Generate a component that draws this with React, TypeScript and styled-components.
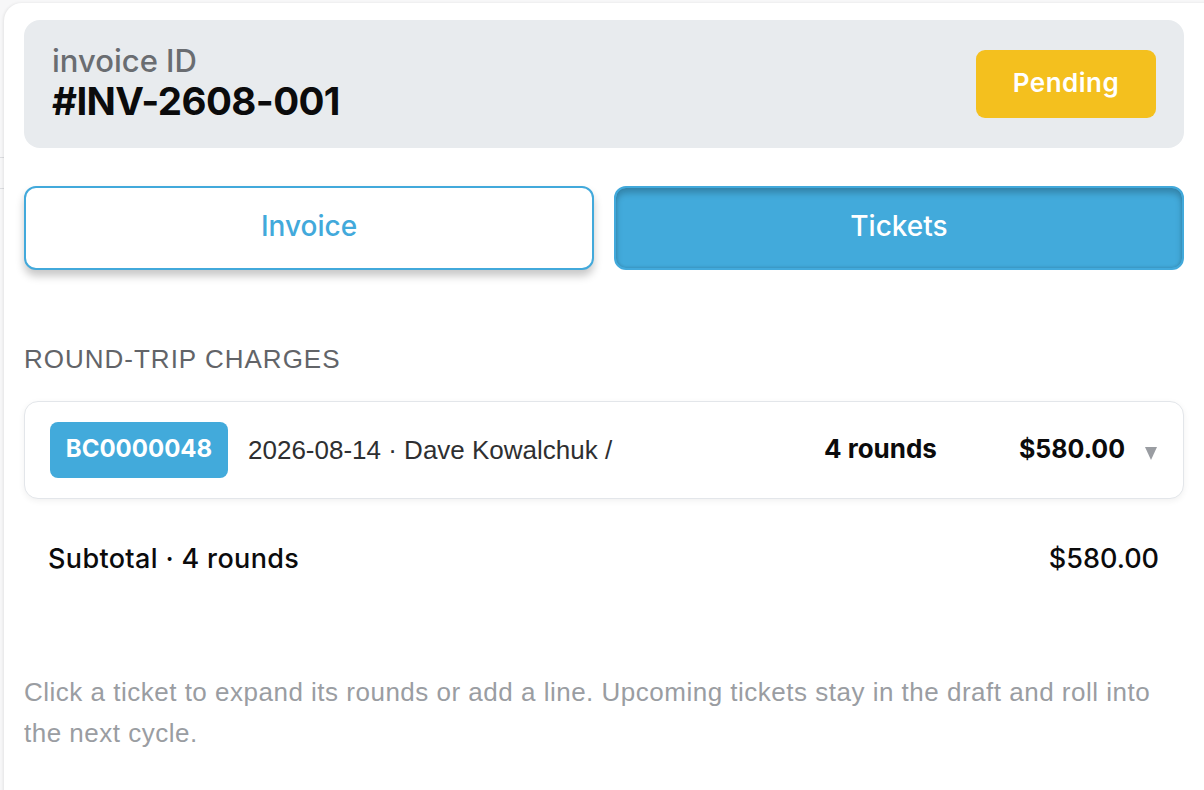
import React from "react";
import styled, { createGlobalStyle } from "styled-components";

const Global = createGlobalStyle`
  html, body { margin: 0; padding: 0; background: #f7f7f8; }
  body { font-family: "Liberation Sans", Arial, sans-serif; overflow: hidden; }
  * { box-sizing: border-box; }
`;

const geo = `"Inter", "Lato", sans-serif`;
const plain = `"Liberation Sans", Arial, sans-serif`;

const Page = styled.div`
  width: 1204px;
  height: 790px;
  position: relative;
  padding-top: 3px;
  padding-left: 4px;
  overflow: hidden;
`;

const Backdrop = styled.div<{ top: number }>`
  position: absolute;
  left: 0;
  width: 10px;
  height: 1px;
  background: #dcdde0;
  top: ${(p) => p.top}px;
`;

const Drawer = styled.div`
  position: relative;
  background: #ffffff;
  border-top-left-radius: 18px;
  box-shadow: -1px 0 3px rgba(0, 0, 0, 0.08);
  min-height: 800px;
  width: 1220px;
  padding: 17px 36px 0 20px;
`;

const Inner = styled.div`
  width: 1160px;
  display: flex;
  flex-direction: column;
`;

const HeaderCard = styled.div`
  height: 128px;
  background: #e8ebee;
  border-radius: 16px;
  display: flex;
  align-items: center;
  justify-content: space-between;
  padding: 0 28px;
`;

const IdBlock = styled.div`
  display: flex;
  flex-direction: column;
  font-family: ${geo};
  margin-top: -3px;
`;

const IdLabel = styled.div`
  font-size: 31px;
  line-height: 36px;
  color: #6a6d71;
  font-weight: 500;
`;

const IdValue = styled.div`
  font-size: 38.5px;
  line-height: 44px;
  font-weight: 700;
  color: #0b0b0c;
  letter-spacing: -0.6px;
`;

const StatusPill = styled.div`
  width: 180px;
  height: 68px;
  border-radius: 9px;
  background: #f4c01e;
  color: #ffffff;
  font-family: ${geo};
  font-weight: 600;
  font-size: 26px;
  letter-spacing: 0.5px;
  display: flex;
  align-items: center;
  justify-content: center;
  padding-bottom: 3px;
`;

const Tabs = styled.div`
  margin-top: 38px;
  display: grid;
  grid-template-columns: 1fr 1fr;
  gap: 20px;
`;

const Tab = styled.div<{ active?: boolean }>`
  height: 84px;
  border-radius: 12px;
  display: flex;
  align-items: center;
  justify-content: center;
  font-family: ${geo};
  font-size: 28px;
  font-weight: 500;
  padding-bottom: 4px;
  border: 2px solid #42a9db;
  background: ${(p) => (p.active ? "#42aadb" : "#ffffff")};
  color: ${(p) => (p.active ? "#ffffff" : "#42a9db")};
  box-shadow: ${(p) =>
    p.active
      ? "inset 0 5px 6px rgba(0,0,0,0.22), inset 0 -1px 3px rgba(0,0,0,0.12)"
      : "0 6px 8px rgba(0,0,0,0.22)"};
`;

const SectionTitle = styled.div`
  margin-top: 74px;
  font-size: 26px;
  line-height: 30px;
  letter-spacing: 1px;
  color: #626468;
  font-family: ${plain};
`;

const TicketCard = styled.div`
  margin-top: 27px;
  height: 98px;
  border: 1px solid #e3e6ea;
  border-radius: 14px;
  background: #fff;
  box-shadow: 0 2px 6px rgba(0, 0, 0, 0.06);
  display: flex;
  align-items: center;
  padding: 0 26px 0 25px;
`;

const Badge = styled.div`
  height: 56px;
  border-radius: 8px;
  background: #42aadb;
  color: #fff;
  font-family: ${geo};
  font-weight: 700;
  font-size: 24px;
  display: flex;
  align-items: center;
  justify-content: center;
  width: 178px;
  padding-bottom: 4px;
`;

const Meta = styled.div`
  margin-left: 20px;
  flex: 1;
  font-size: 26px;
  color: #2e2f31;
  font-family: ${plain};
`;

const Rounds = styled.div`
  font-family: ${geo};
  font-weight: 700;
  font-size: 26px;
  color: #0b0b0c;
  padding-bottom: 3px;
`;

const Amount = styled.div`
  margin-left: 82px;
  font-family: ${geo};
  font-weight: 700;
  font-size: 25px;
  color: #0b0b0c;
  padding-bottom: 3px;
`;

const Caret = styled.div`
  margin-left: 20px;
  width: 0;
  height: 0;
  border-left: 6.5px solid transparent;
  border-right: 6.5px solid transparent;
  border-top: 13px solid #9a9da2;
  margin-top: 6px;
`;

const SubtotalRow = styled.div`
  margin-top: 42px;
  display: flex;
  justify-content: space-between;
  align-items: center;
  padding: 0 25px 0 24px;
  font-family: ${geo};
  font-size: 27px;
  font-weight: 500;
  color: #0b0b0c;
  height: 34px;
`;

const SubtotalLabel = styled.span`
  letter-spacing: 0.35px;
`;

const Note = styled.p`
  margin: 97px 0 0;
  font-size: 26px;
  line-height: 41px;
  letter-spacing: 0.5px;
  color: #9a9da2;
  font-family: ${plain};
`;

export default function App() {
  return (
    <Page>
      <Global />
      <Backdrop top={157} />
      <Backdrop top={188} />
      <Drawer>
        <Inner>
          <HeaderCard>
            <IdBlock>
              <IdLabel>invoice ID</IdLabel>
              <IdValue>#INV-2608-001</IdValue>
            </IdBlock>
            <StatusPill>Pending</StatusPill>
          </HeaderCard>
          <Tabs>
            <Tab>Invoice</Tab>
            <Tab active>Tickets</Tab>
          </Tabs>
          <SectionTitle>ROUND-TRIP CHARGES</SectionTitle>
          <TicketCard>
            <Badge>BC0000048</Badge>
            <Meta>2026-08-14 · Dave Kowalchuk /</Meta>
            <Rounds>4 rounds</Rounds>
            <Amount>$580.00</Amount>
            <Caret />
          </TicketCard>
          <SubtotalRow>
            <SubtotalLabel>Subtotal · 4 rounds</SubtotalLabel>
            <span>$580.00</span>
          </SubtotalRow>
          <Note>
            Click a ticket to expand its rounds or add a line. Upcoming tickets stay in the draft and roll into the next cycle.
          </Note>
        </Inner>
      </Drawer>
    </Page>
  );
}
